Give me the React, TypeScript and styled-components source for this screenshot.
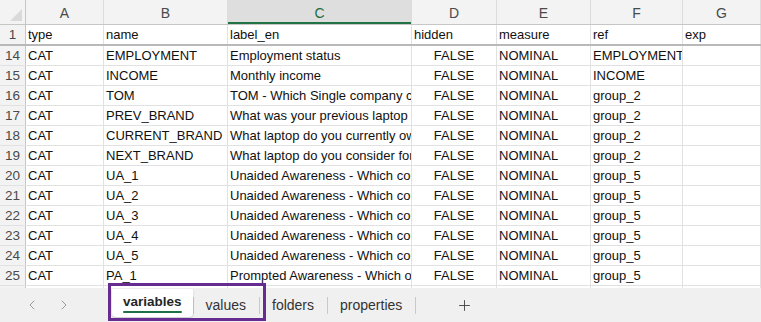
import styled, { createGlobalStyle } from "styled-components";
import { ChevronLeft, ChevronRight, Plus } from "lucide-react";

const GlobalStyle = createGlobalStyle`
  html, body {
    margin: 0;
    padding: 0;
    background: #ffffff;
    overflow: hidden;
  }
  body {
    font-family: "Liberation Sans", Arial, sans-serif;
  }
`;

const COLS = "26px 78px 124px 184px 85px 94px 92px 78px";

const Page = styled.div`
  width: 761px;
  height: 322px;
  position: relative;
  display: flex;
  flex-direction: column;
  overflow: hidden;
`;

const Sheet = styled.div`
  height: 288px;
  overflow: hidden;
  flex-shrink: 0;
`;

const HeaderRow = styled.div`
  display: grid;
  grid-template-columns: ${COLS};
  height: 25px;
  background: #f3f3f3;
  border-bottom: 1px solid #c6c6c6;
  box-sizing: border-box;
`;

const Corner = styled.div`
  position: relative;
  border-right: 1px solid #c6c6c6;
  &::after {
    content: "";
    position: absolute;
    right: 3px;
    bottom: 3px;
    width: 12px;
    height: 12px;
    background: #dadada;
    clip-path: polygon(100% 0, 100% 100%, 0 100%);
  }
`;

const ColHead = styled.div<{ $active?: boolean }>`
  display: flex;
  align-items: center;
  justify-content: center;
  font-size: 14px;
  color: ${(p) => (p.$active ? "#1d6b3d" : "#4a4a4a")};
  background: ${(p) => (p.$active ? "#dedede" : "transparent")};
  border-right: 1px solid #dcdcdc;
  box-shadow: ${(p) => (p.$active ? "inset 0 -2px 0 #217346" : "none")};
  padding-top: 1px;
`;

const Row = styled.div<{ $frozen?: boolean }>`
  display: grid;
  grid-template-columns: ${COLS};
  height: ${(p) => (p.$frozen ? "21px" : "20px")};
  border-bottom: ${(p) => (p.$frozen ? "2px solid #b9b9b9" : "1px solid #e1e1e1")};
  box-sizing: border-box;
`;

const RowHead = styled.div`
  display: flex;
  align-items: center;
  justify-content: center;
  background: #f3f3f3;
  border-right: 1px solid #c6c6c6;
  font-size: 13.5px;
  color: #4a4a4a;
`;

const Cell = styled.div<{ $center?: boolean }>`
  display: flex;
  align-items: center;
  justify-content: ${(p) => (p.$center ? "center" : "flex-start")};
  padding: 0 2px;
  border-right: 1px solid #e1e1e1;
  font-size: 13px;
  color: #111;
  white-space: nowrap;
  overflow: hidden;
`;

const TabBar = styled.div`
  flex: 1;
  display: flex;
  align-items: stretch;
  background: #f0f0f0;
  font-size: 14px;
  color: #333;
`;

const Nav = styled.div`
  width: 112px;
  display: flex;
  align-items: center;
  padding-left: 24px;
  gap: 16px;
  box-sizing: border-box;
  color: #9a9a9a;
`;

const Tab = styled.div<{ $active?: boolean }>`
  position: relative;
  display: flex;
  align-items: center;
  padding: ${(p) => (p.$active ? "0 11px 4px" : "0 13px 0 12px")};
  margin: ${(p) => (p.$active ? "1px 0 5px" : "0")};
  background: ${(p) => (p.$active ? "#ffffff" : "transparent")};
  border-radius: ${(p) => (p.$active ? "0 0 4px 4px" : "0")};
  box-shadow: ${(p) => (p.$active ? "0 1px 2px rgba(0,0,0,0.18)" : "none")};
  font-size: ${(p) => (p.$active ? "13.5px" : "14px")};
  font-weight: ${(p) => (p.$active ? 700 : 400)};
  color: ${(p) => (p.$active ? "#262626" : "#333")};
  &::after {
    content: "";
    display: ${(p) => (p.$active ? "block" : "none")};
    position: absolute;
    left: 11px;
    right: 11px;
    bottom: 4px;
    height: 2px;
    border-radius: 1px;
    background: #1e7145;
  }
`;

const Sep = styled.div`
  width: 1px;
  align-self: center;
  height: 17px;
  background: #c9c9c9;
`;

const AddTab = styled.div`
  width: 96px;
  display: flex;
  align-items: center;
  justify-content: center;
  color: #444;
`;

const Highlight = styled.div`
  position: absolute;
  left: 108px;
  top: 283px;
  width: 158px;
  height: 38px;
  border: 3px solid #672c91;
  box-sizing: border-box;
  pointer-events: none;
`;

const letters = ["A", "B", "C", "D", "E", "F", "G"];

const rows: { n: number; cells: string[] }[] = [
  { n: 14, cells: ["CAT", "EMPLOYMENT", "Employment status", "FALSE", "NOMINAL", "EMPLOYMENT", ""] },
  { n: 15, cells: ["CAT", "INCOME", "Monthly income", "FALSE", "NOMINAL", "INCOME", ""] },
  { n: 16, cells: ["CAT", "TOM", "TOM - Which Single company comes to mind first", "FALSE", "NOMINAL", "group_2", ""] },
  { n: 17, cells: ["CAT", "PREV_BRAND", "What was your previous laptop brand", "FALSE", "NOMINAL", "group_2", ""] },
  { n: 18, cells: ["CAT", "CURRENT_BRAND", "What laptop do you currently own", "FALSE", "NOMINAL", "group_2", ""] },
  { n: 19, cells: ["CAT", "NEXT_BRAND", "What laptop do you consider for your next purchase", "FALSE", "NOMINAL", "group_2", ""] },
  { n: 20, cells: ["CAT", "UA_1", "Unaided Awareness - Which companies do you know", "FALSE", "NOMINAL", "group_5", ""] },
  { n: 21, cells: ["CAT", "UA_2", "Unaided Awareness - Which companies do you know", "FALSE", "NOMINAL", "group_5", ""] },
  { n: 22, cells: ["CAT", "UA_3", "Unaided Awareness - Which companies do you know", "FALSE", "NOMINAL", "group_5", ""] },
  { n: 23, cells: ["CAT", "UA_4", "Unaided Awareness - Which companies do you know", "FALSE", "NOMINAL", "group_5", ""] },
  { n: 24, cells: ["CAT", "UA_5", "Unaided Awareness - Which companies do you know", "FALSE", "NOMINAL", "group_5", ""] },
  { n: 25, cells: ["CAT", "PA_1", "Prompted Awareness - Which of these companies do you know", "FALSE", "NOMINAL", "group_5", ""] },
  { n: 26, cells: ["CAT", "PA_2", "Prompted Awareness - Which of these companies do you know", "FALSE", "NOMINAL", "group_5", ""] },
];

const headers = ["type", "name", "label_en", "hidden", "measure", "ref", "exp"];

export default function App() {
  return (
    <Page>
      <GlobalStyle />
      <Sheet>
        <HeaderRow>
          <Corner />
          {letters.map((l) => (
            <ColHead key={l} $active={l === "C"}>
              {l}
            </ColHead>
          ))}
        </HeaderRow>
        <Row $frozen>
          <RowHead>1</RowHead>
          {headers.map((h) => (
            <Cell key={h}>{h}</Cell>
          ))}
        </Row>
        {rows.map((r) => (
          <Row key={r.n}>
            <RowHead>{r.n}</RowHead>
            {r.cells.map((c, i) => (
              <Cell key={i} $center={c === "FALSE"}>
                {c}
              </Cell>
            ))}
          </Row>
        ))}
      </Sheet>
      <TabBar>
        <Nav>
          <ChevronLeft size={16} strokeWidth={1.5} />
          <ChevronRight size={16} strokeWidth={1.5} />
        </Nav>
        <Tab $active>variables</Tab>
        <Sep />
        <Tab>values</Tab>
        <Sep />
        <Tab>folders</Tab>
        <Sep />
        <Tab>properties</Tab>
        <Sep />
        <AddTab>
          <Plus size={17} strokeWidth={1.3} />
        </AddTab>
      </TabBar>
      <Highlight />
    </Page>
  );
}
